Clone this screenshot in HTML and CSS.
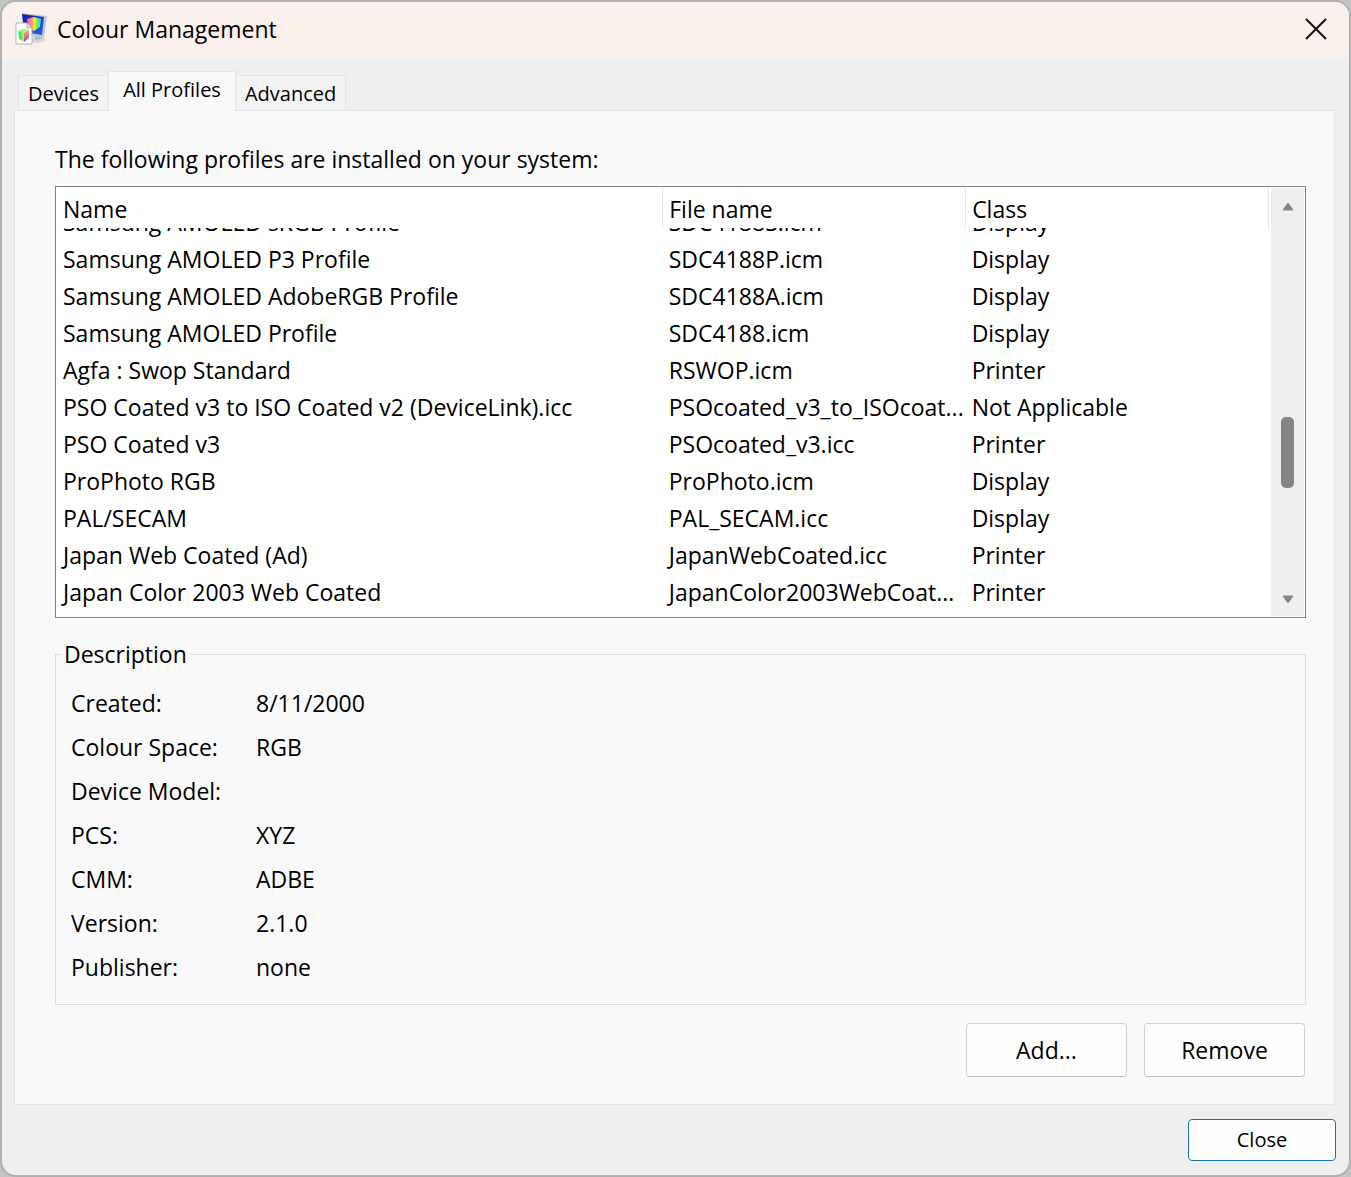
FILE: index.html
```
<!DOCTYPE html>
<html lang="en-GB">
<head>
  <meta charset="UTF-8" />
  <meta name="viewport" content="width=device-width, initial-scale=1.0" />
  <title>Colour Management</title>
  <link rel="stylesheet" href="styles.css">
</head>
<body>
  <div class="window">
    <header class="titlebar">
      <svg class="app-icon" viewBox="0 0 32 32" aria-hidden="true">
        <defs>
          <linearGradient id="screen" x1="0" y1="0" x2="1" y2="1">
            <stop offset="0" stop-color="#0c1c9c" />
            <stop offset="1" stop-color="#2c62ea" />
          </linearGradient>
          <linearGradient id="rainbow" x1="0" y1="0" x2="1" y2="0">
            <stop offset="0" stop-color="#e860f0" />
            <stop offset="0.3" stop-color="#ff8a7a" />
            <stop offset="0.55" stop-color="#ffe83c" />
            <stop offset="0.75" stop-color="#4cf060" />
            <stop offset="1" stop-color="#30d8f8" />
          </linearGradient>
          <linearGradient id="side" x1="0" y1="0" x2="1" y2="0">
            <stop offset="0" stop-color="#30d8f0" />
            <stop offset="0.5" stop-color="#3cf040" />
            <stop offset="1" stop-color="#f0f030" />
          </linearGradient>
          <linearGradient id="front" x1="0" y1="0" x2="0" y2="1">
            <stop offset="0" stop-color="#ffb048" />
            <stop offset="0.5" stop-color="#f07090" />
            <stop offset="1" stop-color="#6858f0" />
          </linearGradient>
        </defs>
        <path d="M18 23l8-1 5 5-7 3-8-1z" fill="#d4d6dc" />
        <path d="M20 21l6 1 1 4-7 1z" fill="#b4b7c0" />
        <path d="M7 0L32 3l-3 22-19-4z" fill="#c2c6d2" />
        <path d="M7 1l22 3-2 18-18-3z" fill="url(#screen)" />
        <path d="M12 6l7-2 7 2-1 8-6 4-6-3z" fill="url(#rainbow)" />
        <path d="M1 10h11l5 5v16H1z" fill="#fff" stroke="#b4b4b8" />
        <path d="M12 10v5h5z" fill="#e6e6ea" stroke="#b4b4b8" />
        <path d="M3 18l4-2 7 1-5 3z" fill="#a0f078" />
        <path d="M3 18l6 2v9l-5-3z" fill="url(#side)" />
        <path d="M9 20l5-3v8l-5 4z" fill="url(#front)" />
      </svg>
      <h1>Colour Management</h1>
      <button type="button" class="window-close" aria-label="Close window">
        <svg viewBox="0 0 20 20" aria-hidden="true">
          <path d="M0 0l20 20M20 0L0 20" />
        </svg>
      </button>
    </header>

    <main class="dialog">
      <div class="tabs" role="tablist">
        <button type="button" class="tab" role="tab">Devices</button>
        <button type="button" class="tab active" role="tab" aria-selected="true">All Profiles</button>
        <button type="button" class="tab" role="tab">Advanced</button>
      </div>

      <section class="panel">
        <p class="intro" id="intro">The following profiles are installed on your system:</p>

        <div class="list">
          <table aria-labelledby="intro">
            <thead>
              <tr><th>Name</th><th>File name</th><th>Class</th></tr>
            </thead>
            <tbody>
              <!-- scrolled halfway under the header -->
              <tr class="cut">
                <td><div>Samsung AMOLED sRGB Profile</div></td>
                <td><div>SDC4188S.icm</div></td>
                <td><div>Display</div></td>
              </tr>
              <tr><td>Samsung AMOLED P3 Profile</td><td>SDC4188P.icm</td><td>Display</td></tr>
              <tr><td>Samsung AMOLED AdobeRGB Profile</td><td>SDC4188A.icm</td><td>Display</td></tr>
              <tr><td>Samsung AMOLED Profile</td><td>SDC4188.icm</td><td>Display</td></tr>
              <tr><td>Agfa : Swop Standard</td><td>RSWOP.icm</td><td>Printer</td></tr>
              <tr><td>PSO Coated v3 to ISO Coated v2 (DeviceLink).icc</td><td>PSOcoated_v3_to_ISOcoat...</td><td>Not Applicable</td></tr>
              <tr><td>PSO Coated v3</td><td>PSOcoated_v3.icc</td><td>Printer</td></tr>
              <tr><td>ProPhoto RGB</td><td>ProPhoto.icm</td><td>Display</td></tr>
              <tr><td>PAL/SECAM</td><td>PAL_SECAM.icc</td><td>Display</td></tr>
              <tr><td>Japan Web Coated (Ad)</td><td>JapanWebCoated.icc</td><td>Printer</td></tr>
              <tr><td>Japan Color 2003 Web Coated</td><td>JapanColor2003WebCoat...</td><td>Printer</td></tr>
            </tbody>
          </table>
          <div class="scrollbar">
            <svg viewBox="0 0 12 9" aria-hidden="true"><path d="M6 1l5 7H1z" /></svg>
            <div class="track"><div class="thumb"></div></div>
            <svg viewBox="0 0 12 9" aria-hidden="true"><path d="M1 1h10L6 8z" /></svg>
          </div>
        </div>

        <fieldset class="description">
          <legend>Description</legend>
          <dl>
            <dt>Created:</dt><dd>8/11/2000</dd>
            <dt>Colour Space:</dt><dd>RGB</dd>
            <dt>Device Model:</dt><dd></dd>
            <dt>PCS:</dt><dd>XYZ</dd>
            <dt>CMM:</dt><dd>ADBE</dd>
            <dt>Version:</dt><dd>2.1.0</dd>
            <dt>Publisher:</dt><dd>none</dd>
          </dl>
        </fieldset>

        <div class="actions">
          <button type="button" class="btn">Add...</button>
          <button type="button" class="btn">Remove</button>
        </div>
      </section>

      <footer class="footer">
        <button type="button" class="btn default">Close</button>
      </footer>
    </main>
  </div>
</body>
</html>
```
FILE: styles.css
```
* {
  box-sizing: border-box;
}

body {
  margin: 0;
  background-color: #c4c4c4;
  color: #000;
  font-family: "Segoe UI", "Open Sans", "Noto Sans", sans-serif;
  font-size: 23px;
  line-height: 36px;
}

button {
  font: inherit;
  color: inherit;
  padding: 0;
}

.window {
  min-height: 100vh;
  display: flex;
  flex-direction: column;
  border: 2px solid #b0b0b0;
  border-radius: 16px;
  background-color: #efefef;
  overflow: hidden;
}

.titlebar {
  display: flex;
  align-items: center;
  height: 56px;
  padding: 0 23px 2px 13px;
  background-color: #faf0ec;
}

.titlebar h1 {
  flex: 1;
  margin: 0 0 0 10px;
  font-size: 23px;
  font-weight: normal;
}

.app-icon {
  width: 32px;
  height: 32px;
}

.window-close {
  display: flex;
  border: none;
  background: none;
}

.window-close svg {
  width: 20px;
  height: 20px;
  overflow: visible;
  fill: none;
  stroke: #111;
  stroke-width: 2;
}

.dialog {
  flex: 1;
  display: flex;
  flex-direction: column;
  padding: 13px 14px 14px 12px;
}

.tabs {
  display: flex;
  align-items: flex-end;
  padding-left: 4px;
}

.tab {
  height: 35px;
  padding: 0 9px;
  border: 1px solid #e4e4e4;
  border-bottom: none;
  background-color: #f3f3f3;
  font-size: 20px;
}

.tab.active {
  position: relative;
  height: 40px;
  margin: 0 -1px -1px;
  padding: 0 14px 4px;
  background-color: #f9f9f9;
}

.panel {
  flex: 1;
  display: flex;
  flex-direction: column;
  padding: 30px 28px 27px 40px;
  border: 1px solid #e4e4e4;
  background-color: #f9f9f9;
}

.intro {
  margin: 0 0 9px;
}

.list {
  display: flex;
  padding: 1px;
  border: 1px solid #828282;
  background-color: #fff;
}

table {
  flex: 1;
  align-self: flex-start;
  table-layout: fixed;
  border-collapse: collapse;
  margin-bottom: 6px;
}

th,
td {
  height: 37px;
  padding: 0 0 0 6px;
  font-weight: normal;
  text-align: left;
  white-space: nowrap;
}

th {
  width: 25%;
  height: 40px;
  padding-top: 2px;
  border-right: 1px solid #e5e5e5;
}

th:first-child {
  width: 50%;
}

.cut td {
  height: 12px;
}

.cut div {
  display: flex;
  align-items: flex-end;
  height: 12px;
  overflow: hidden;
}

.scrollbar {
  display: flex;
  flex-direction: column;
  align-items: center;
  width: 33px;
  margin-left: 2px;
  padding: 14px 0 12px;
  background-color: #efefef;
}

.scrollbar svg {
  width: 12px;
  height: 9px;
  fill: #858585;
  stroke: #858585;
  stroke-linejoin: round;
}

.track {
  flex: 1;
  padding-top: 206px;
}

.thumb {
  width: 13px;
  height: 71px;
  border-radius: 5px;
  background-color: #858585;
}

.description {
  margin: 18px 0;
  padding: 9px 15px 15px;
  border: 1px solid #dcdcdc;
}

.description legend {
  margin-left: -10px;
  padding: 0 3px;
}

.description dl {
  display: grid;
  grid-template-columns: 185px 1fr;
  margin: 0;
  line-height: 44px;
}

.description dd {
  margin: 0;
}

.actions {
  display: flex;
  justify-content: flex-end;
  gap: 17px;
  padding-right: 1px;
}

.btn {
  width: 161px;
  height: 54px;
  border: 1px solid #d0d0d0;
  border-bottom-color: #bcbcbc;
  border-radius: 4px;
  background-color: #fdfdfd;
}

.btn.default {
  width: 148px;
  height: 42px;
  border-color: #1a73b0;
  font-size: 20px;
}

.footer {
  display: flex;
  justify-content: flex-end;
  padding-top: 14px;
  margin-right: -1px;
}
```
